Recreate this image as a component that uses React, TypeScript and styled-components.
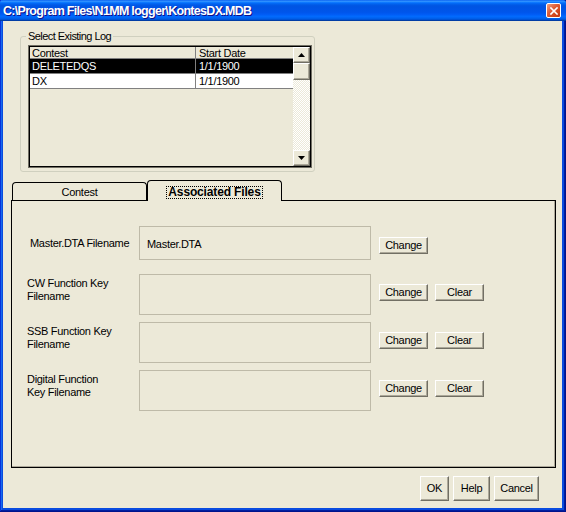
import React from 'react';
import styled, { createGlobalStyle, css } from 'styled-components';

const Global = createGlobalStyle`
  html, body { margin: 0; padding: 0; width: 566px; height: 512px; overflow: hidden; background: #0831D9; }
  body { font-family: "Liberation Sans", Arial, sans-serif; font-size: 11px; color: #000; }
  * { box-sizing: border-box; }
`;

const raised = css`
  background: #ECE9D8;
  border: 1px solid;
  border-color: #fff #716F64 #716F64 #fff;
  box-shadow: inset -1px -1px #ACA899;
`;

const Window = styled.div`
  width: 566px;
  height: 512px;
  display: flex;
  flex-direction: column;
  background: #0A4BDF;
  box-shadow: inset -1px -1px #00138C, inset 1px 0 #0831D9, inset -2px -2px #001EA0, inset 2px 0 #166AEE;
`;

const TitleBar = styled.div`
  height: 21px;
  flex: none;
  display: flex;
  align-items: center;
  justify-content: space-between;
  padding: 0 5px 0 3px;
  background: linear-gradient(180deg, #0058EE 0%, #3593FF 5%, #288EFF 8%, #127DFF 11%, #036FFC 14%, #0262EE 19%, #0057E5 26%, #0054E3 32%, #0055EB 58%, #005BF5 68%, #026AFE 78%, #0062EF 87%, #0052D6 93%, #0040AB 97%, #003092 100%);
  border-radius: 3px 3px 0 0;
`;

const Title = styled.div`
  color: #fff;
  font-weight: bold;
  font-size: 12.5px;
  letter-spacing: -0.7px;
  text-shadow: 1px 1px #0F1089;
  white-space: nowrap;
`;

const CloseBtn = styled.div`
  width: 15px;
  height: 15px;
  border: 1px solid #fff;
  border-radius: 2px;
  background: linear-gradient(135deg, #F0A080 0%, #E0603A 40%, #D4471C 70%, #C13A12 100%);
  display: flex;
  align-items: center;
  justify-content: center;
`;

const Body = styled.div`
  flex: 1;
  margin: 0 4px 4px 3px;
  background: #ECE9D8;
  display: flex;
  flex-direction: column;
`;

const Group = styled.fieldset`
  margin: 9px 0 0 17px;
  width: 295px;
  min-width: 0;
  padding: 2px 2px 3px 7px;
  border: 1px solid #D0D0BF;
  border-radius: 3px;
`;

const Legend = styled.legend`
  margin-left: -2px;
  padding: 0 2px;
  line-height: 13px;
  letter-spacing: -0.55px;
`;

const ListFrame = styled.div`
  width: 284px;
  height: 123px;
  border: 1px solid #716F64;
`;

const ListInner = styled.div`
  height: 100%;
  border: 1px solid #000;
  display: flex;
`;

const Grid = styled.div`
  flex: 1;
  display: flex;
  flex-direction: column;
`;

const Row = styled.div<{ $kind: 'head' | 'sel' | 'norm' }>`
  display: flex;
  height: ${p => (p.$kind === 'head' ? 12 : 15)}px;
  border-bottom: 1px solid #808080;
  background: ${p => (p.$kind === 'head' ? '#ECE9D8' : p.$kind === 'sel' ? '#000' : '#fff')};
  color: ${p => (p.$kind === 'sel' ? '#fff' : '#000')};
`;

const Cell = styled.div<{ $first?: boolean }>`
  width: ${p => (p.$first ? '166px' : 'auto')};
  flex: ${p => (p.$first ? 'none' : '1')};
  border-right: ${p => (p.$first ? '1px solid #808080' : 'none')};
  padding-left: ${p => (p.$first ? 2 : 3)}px;
  display: flex;
  align-items: center;
  letter-spacing: -0.3px;
  white-space: nowrap;
`;

const ScrollBar = styled.div`
  width: 17px;
  flex: none;
  display: flex;
  flex-direction: column;
  background-color: #fff;
  background-image: repeating-conic-gradient(#ECE9D8 0% 25%, #fff 0% 50%);
  background-size: 2px 2px;
`;

const ScrollBtn = styled.div<{ $h: number }>`
  ${raised}
  height: ${p => p.$h}px;
  flex: none;
  display: flex;
  align-items: center;
  justify-content: center;
`;

const Spacer = styled.div`
  flex: 1;
`;

const TabArea = styled.div`
  margin: 8px 6px 0 8px;
  display: flex;
  flex-direction: column;
`;

const TabStrip = styled.div`
  display: flex;
  align-items: flex-end;
  padding-left: 1px;
`;

const Tab = styled.div<{ $active?: boolean }>`
  width: 135px;
  height: ${p => (p.$active ? 21 : 18)}px;
  margin-bottom: ${p => (p.$active ? -1 : 0)}px;
  position: relative;
  z-index: ${p => (p.$active ? 1 : 0)};
  background: #ECE9D8;
  border: 1px solid #000;
  border-bottom: none;
  border-radius: 4px 4px 0 0;
  display: flex;
  align-items: center;
  justify-content: center;
  padding-top: ${p => (p.$active ? 2 : 0)}px;
  letter-spacing: -0.3px;
  font-weight: ${p => (p.$active ? 'bold' : 'normal')};
  font-size: ${p => (p.$active ? '12px' : '11px')};
`;

const Focus = styled.span`
  display: inline-block;
  height: 13px;
  line-height: 11px;
  padding: 0 1px;
  border: 1px dotted #000;
  letter-spacing: -0.15px;
`;

const Panel = styled.div`
  height: 268px;
  border: 1px solid #000;
  box-shadow: inset -1px -1px #ACA899;
  padding: 25px 0 0 15px;
  display: flex;
  flex-direction: column;
  gap: 7px;
`;

const FileRow = styled.div<{ $h: number; $after?: number }>`
  display: flex;
  align-items: flex-start;
  height: ${p => p.$h}px;
  margin-bottom: ${p => p.$after ?? 0}px;
`;

const Label = styled.div<{ $single?: boolean }>`
  width: 112px;
  flex: none;
  line-height: 13px;
  letter-spacing: -0.3px;
  margin-top: ${p => (p.$single ? 1 : 3)}px;
  padding-left: ${p => (p.$single ? 3 : 0)}px;
  align-self: ${p => (p.$single ? 'center' : 'flex-start')};
`;

const Field = styled.div`
  width: 232px;
  height: 100%;
  flex: none;
  border: 1px solid #BEBAA8;
  display: flex;
  align-items: center;
  padding: 1px 0 0 7px;
  letter-spacing: -0.3px;
`;

const Actions = styled.div<{ $top: number }>`
  display: flex;
  gap: 7px;
  margin-left: 8px;
  margin-top: ${p => p.$top}px;
`;

const Btn = styled.div<{ $w: number; $h: number }>`
  ${raised}
  width: ${p => p.$w}px;
  height: ${p => p.$h}px;
  display: flex;
  align-items: center;
  justify-content: center;
  letter-spacing: -0.3px;
  padding-bottom: 1px;
`;

const ButtonBar = styled.div`
  display: flex;
  justify-content: flex-end;
  gap: 4px;
  margin-top: 8px;
  padding-right: 23px;
`;

const Arrow = ({ down }: { down?: boolean }) => (
  <svg width="7" height="4" viewBox="0 0 7 4">
    <polygon points={down ? '0,0 7,0 3.5,4' : '3.5,0 7,4 0,4'} fill="#000" />
  </svg>
);

const rows = [
  { name: 'DELETEDQS', date: '1/1/1900', sel: true },
  { name: 'DX', date: '1/1/1900', sel: false },
];

const files = [
  { label: ['CW Function Key', 'Filename'] },
  { label: ['SSB Function Key', 'Filename'] },
  { label: ['Digital Function', 'Key Filename'] },
];

export default function App() {
  return (
    <>
      <Global />
      <Window>
        <TitleBar>
          <Title>{'C:\\Program Files\\N1MM logger\\KontesDX.MDB'}</Title>
          <CloseBtn>
            <svg width="8" height="8" viewBox="0 0 8 8">
              <path d="M1 1 L7 7 M7 1 L1 7" stroke="#fff" strokeWidth="1.6" strokeLinecap="square" />
            </svg>
          </CloseBtn>
        </TitleBar>
        <Body>
          <Group>
            <Legend>Select Existing Log</Legend>
            <ListFrame>
              <ListInner>
                <Grid>
                  <Row $kind="head">
                    <Cell $first>Contest</Cell>
                    <Cell>Start Date</Cell>
                  </Row>
                  {rows.map(r => (
                    <Row key={r.name} $kind={r.sel ? 'sel' : 'norm'}>
                      <Cell $first>{r.name}</Cell>
                      <Cell>{r.date}</Cell>
                    </Row>
                  ))}
                </Grid>
                <ScrollBar>
                  <ScrollBtn $h={16}><Arrow /></ScrollBtn>
                  <ScrollBtn $h={17} />
                  <Spacer />
                  <ScrollBtn $h={16}><Arrow down /></ScrollBtn>
                </ScrollBar>
              </ListInner>
            </ListFrame>
          </Group>
          <TabArea>
            <TabStrip>
              <Tab>Contest</Tab>
              <Tab $active><Focus>Associated Files</Focus></Tab>
            </TabStrip>
            <Panel>
              <FileRow $h={34} $after={7}>
                <Label $single>Master.DTA Filename</Label>
                <Field>Master.DTA</Field>
                <Actions $top={11}>
                  <Btn $w={49} $h={17}>Change</Btn>
                </Actions>
              </FileRow>
              {files.map(f => (
                <FileRow key={f.label.join()} $h={41}>
                  <Label>
                    {f.label[0]}
                    <br />
                    {f.label[1]}
                  </Label>
                  <Field />
                  <Actions $top={10}>
                    <Btn $w={49} $h={17}>Change</Btn>
                    <Btn $w={49} $h={17}>Clear</Btn>
                  </Actions>
                </FileRow>
              ))}
            </Panel>
          </TabArea>
          <ButtonBar>
            <Btn $w={29} $h={25}>OK</Btn>
            <Btn $w={37} $h={25}>Help</Btn>
            <Btn $w={45} $h={25}>Cancel</Btn>
          </ButtonBar>
        </Body>
      </Window>
    </>
  );
}
